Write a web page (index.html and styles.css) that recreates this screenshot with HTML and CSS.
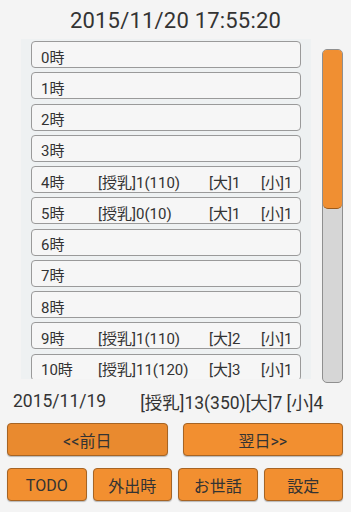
FILE: index.html
```html
<!DOCTYPE html>
<html lang="ja">

<head>
    <meta charset="UTF-8">
    <meta name="viewport" content="width=device-width, initial-scale=1.0">
    <title>授乳記録</title>
    <link rel="stylesheet" href="styles.css">
</head>

<body>
    <div class="clock">2015/11/20 17:55:20</div>

    <div class="list-area">
        <div class="hour-list">
            <div class="hour-row"><span class="hour">0時</span></div>
            <div class="hour-row"><span class="hour">1時</span></div>
            <div class="hour-row"><span class="hour">2時</span></div>
            <div class="hour-row"><span class="hour">3時</span></div>
            <div class="hour-row">
                <span class="hour">4時</span>
                <span class="milk">[授乳]1(110)</span>
                <span class="big">[大]1</span>
                <span class="small">[小]1</span>
            </div>
            <div class="hour-row">
                <span class="hour">5時</span>
                <span class="milk">[授乳]0(10)</span>
                <span class="big">[大]1</span>
                <span class="small">[小]1</span>
            </div>
            <div class="hour-row"><span class="hour">6時</span></div>
            <div class="hour-row"><span class="hour">7時</span></div>
            <div class="hour-row"><span class="hour">8時</span></div>
            <div class="hour-row">
                <span class="hour">9時</span>
                <span class="milk">[授乳]1(110)</span>
                <span class="big">[大]2</span>
                <span class="small">[小]1</span>
            </div>
            <div class="hour-row">
                <span class="hour">10時</span>
                <span class="milk">[授乳]11(120)</span>
                <span class="big">[大]3</span>
                <span class="small">[小]1</span>
            </div>
        </div>

        <!-- day slider -->
        <div class="slider">
            <div class="slider-thumb"></div>
        </div>
    </div>

    <div class="summary">
        <span class="summary-date">2015/11/19</span>
        <span class="summary-total">[授乳]13(350)[大]7 [小]4</span>
    </div>

    <div class="day-buttons">
        <button class="btn pressed">&lt;&lt;前日</button>
        <button class="btn">翌日&gt;&gt;</button>
    </div>

    <div class="menu-buttons">
        <button class="btn">TODO</button>
        <button class="btn">外出時</button>
        <button class="btn">お世話</button>
        <button class="btn">設定</button>
    </div>
</body>

</html>
```

FILE: styles.css
```css
* {
    box-sizing: border-box;
    margin: 0;
    padding: 0;
}

body {
    font-family: Roboto, "Noto Sans CJK JP", sans-serif;
    background-color: #f4f4f4;
    color: #333;
    width: 351px;
    height: 512px;
    overflow: hidden;
}

.clock {
    height: 39px;
    padding-top: 7px;
    text-align: center;
    font-size: 22px;
    line-height: 28px;
    letter-spacing: 0.2px;
    color: #333;
}

.list-area {
    display: flex;
    align-items: flex-start;
    height: 344px;
}

.hour-list {
    margin-left: 21px;
    width: 290px;
    height: 340px;
    overflow: hidden;
    background-color: #eef1f2;
    padding: 2px 10px 0 10px;
}

.hour-row {
    display: flex;
    align-items: center;
    height: 27px;
    margin-bottom: 4.25px;
    border: 1px solid #9a9a9a;
    border-radius: 4px;
    background-color: #f6f6f6;
    font-size: 15px;
    padding-top: 3px;
    white-space: nowrap;
}

.hour {
    width: 66px;
    padding-left: 9px;
}

.milk {
    width: 111px;
}

.big {
    width: 52px;
}

.slider {
    margin-left: 11px;
    margin-top: 10px;
    width: 21px;
    height: 334px;
    background-color: #d6d6d6;
    border: 1px solid #8f8f8f;
    border-radius: 5px;
    overflow: hidden;
}

.slider-thumb {
    height: 159px;
    background-color: #f08f32;
    border-bottom: 1px solid #9a5a1c;
    border-radius: 0 0 5px 5px;
}

.summary {
    display: flex;
    align-items: center;
    height: 34px;
    font-size: 17.5px;
    padding-top: 2px;
    padding-left: 13px;
    white-space: nowrap;
}

.summary-total {
    margin-left: 34px;
}

.day-buttons {
    display: flex;
    gap: 15px;
    padding: 6px 8px 0 7px;
}

.day-buttons .btn {
    flex: 1;
    height: 33px;
}

.menu-buttons {
    display: flex;
    gap: 6px;
    padding: 12px 8px 0 7px;
}

.menu-buttons .btn {
    flex: 1;
    height: 33px;
}

.btn {
    font-family: Roboto, "Noto Sans CJK JP", sans-serif;
    font-size: 16px;
    color: #333;
    background-color: #f28f30;
    border: 1px solid #a66424;
    border-radius: 4px;
    box-shadow: 0 1px 1px rgba(0, 0, 0, 0.25);
    padding-top: 1px;
}

.btn.pressed {
    background-color: #e98a2f;
}
```
